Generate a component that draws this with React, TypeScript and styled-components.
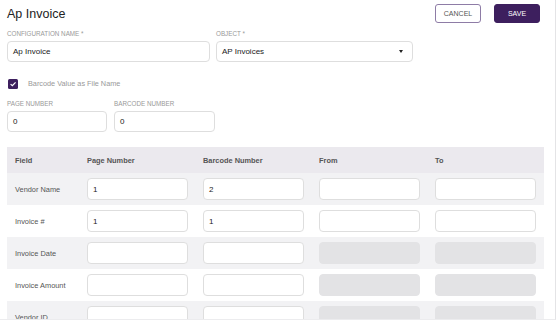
import React from 'react';
import styled, { createGlobalStyle } from 'styled-components';

const GlobalStyle = createGlobalStyle`
	body {
		margin: 0;
		background: #fff;
		font-family: 'Liberation Sans', Arial, sans-serif;
	}
	* {
		box-sizing: border-box;
	}
`;

const Page = styled.div`
	width: 556px;
	height: 320px;
	overflow: hidden;
	border-right: 1px solid #e4e4e6;
	border-bottom: 1px solid #ececee;
	padding: 4px 0 0 7px;
`;

const TopBar = styled.div`
	display: flex;
	align-items: flex-start;
	justify-content: space-between;
	padding-right: 15px;
	height: 26px;
`;

const Title = styled.h1`
	margin: 3px 0 0;
	font-size: 12.5px;
	font-weight: 400;
	color: #222;
`;

const Actions = styled.div`
	display: flex;
	gap: 13px;
`;

type ButtonProps = {
	primary?: boolean;
};

const Button = styled.button<ButtonProps>`
	height: 19px;
	width: 46px;
	border-radius: 3px;
	font-family: inherit;
	font-size: 7px;
	text-transform: uppercase;
	padding: 0;
	cursor: pointer;
	border: 1px solid
		${(props: ButtonProps) => (props.primary ? '#3d1f5e' : '#8e7ca6')};
	background: ${(props: ButtonProps) => (props.primary ? '#3d1f5e' : '#fff')};
	color: ${(props: ButtonProps) => (props.primary ? '#fff' : '#555')};
`;

const Row = styled.div`
	display: flex;
	gap: 6px;
`;

type FieldProps = {
	width: number;
};

const Field = styled.div<FieldProps>`
	display: flex;
	flex-direction: column;
	width: ${(props: FieldProps) => props.width}px;
`;

const Label = styled.label`
	font-size: 6.3px;
	color: #999;
	text-transform: uppercase;
	height: 7px;
	line-height: 7px;
	margin-bottom: 4px;
`;

const TextBox = styled.div`
	height: 21px;
	border: 1px solid #dedede;
	border-radius: 4px;
	background: #fff;
	display: flex;
	align-items: center;
	padding: 0 8px 0 5px;
	font-size: 8px;
	color: #222;
`;

const SelectBox = styled(TextBox)`
	justify-content: space-between;
`;

const Caret = styled.span`
	width: 0;
	height: 0;
	border-left: 2.5px solid transparent;
	border-right: 2.5px solid transparent;
	border-top: 3px solid #222;
	margin-right: 1px;
`;

const CheckRow = styled.div`
	display: flex;
	align-items: center;
	gap: 10px;
	margin: 16px 0 0 1px;
	height: 11px;
`;

const CheckBox = styled.span`
	width: 10px;
	height: 10px;
	border-radius: 1.5px;
	background: #3d1f5e;
	display: flex;
	align-items: center;
	justify-content: center;
`;

const CheckText = styled.span`
	font-size: 7.3px;
	color: #999;
`;

const NumbersRow = styled(Row)`
	margin-top: 11px;
	gap: 7px;
`;

const Table = styled.div`
	margin-top: 15px;
	width: 537px;
`;

type GridRowProps = {
	tone: 'head' | 'stripe' | 'plain';
};

const GridRow = styled.div<GridRowProps>`
	display: grid;
	grid-template-columns: 57px repeat(4, 101px);
	column-gap: 15px;
	align-items: center;
	padding: 0 8px;
	height: ${(props: GridRowProps) => (props.tone === 'head' ? '26px' : '32px')};
	background: ${(props: GridRowProps) =>
		props.tone === 'head'
			? '#ebe9ee'
			: props.tone === 'stripe'
				? '#f2f2f4'
				: '#fff'};
`;

const HeadCell = styled.div`
	font-size: 7.4px;
	font-weight: 700;
	color: #555;
`;

const FieldName = styled.div`
	font-size: 7.4px;
	color: #555;
	white-space: nowrap;
`;

type CellInputProps = {
	disabled?: boolean;
};

const CellInput = styled.div<CellInputProps>`
	height: 22px;
	border-radius: 4px;
	border: 1px solid
		${(props: CellInputProps) => (props.disabled ? '#e3e3e5' : '#dedede')};
	background: ${(props: CellInputProps) => (props.disabled ? '#e3e3e5' : '#fff')};
	display: flex;
	align-items: center;
	padding-left: 5px;
	font-size: 8px;
	color: #222;
`;

const rows = [
	{ name: 'Vendor Name', page: '1', barcode: '2', range: true },
	{ name: 'Invoice #', page: '1', barcode: '1', range: true },
	{ name: 'Invoice Date', page: '', barcode: '', range: false },
	{ name: 'Invoice Amount', page: '', barcode: '', range: false },
	{ name: 'Vendor ID', page: '', barcode: '', range: false },
];

const App: React.FC = () => {
	return (
		<Page>
			<GlobalStyle />
			<TopBar>
				<Title>Ap Invoice</Title>
				<Actions>
					<Button>Cancel</Button>
					<Button primary>Save</Button>
				</Actions>
			</TopBar>
			<Row>
				<Field width={203}>
					<Label>Configuration Name *</Label>
					<TextBox>Ap Invoice</TextBox>
				</Field>
				<Field width={197}>
					<Label>Object *</Label>
					<SelectBox>
						AP Invoices
						<Caret />
					</SelectBox>
				</Field>
			</Row>
			<CheckRow>
				<CheckBox>
					<svg width="8" height="8" viewBox="0 0 10 10">
						<path
							d="M2 5.2 L4.2 7.2 L8.2 3"
							fill="none"
							stroke="#fff"
							strokeWidth="1.5"
						/>
					</svg>
				</CheckBox>
				<CheckText>Barcode Value as File Name</CheckText>
			</CheckRow>
			<NumbersRow>
				<Field width={100}>
					<Label>Page Number</Label>
					<TextBox>0</TextBox>
				</Field>
				<Field width={101}>
					<Label>Barcode Number</Label>
					<TextBox>0</TextBox>
				</Field>
			</NumbersRow>
			<Table>
				<GridRow tone="head">
					<HeadCell>Field</HeadCell>
					<HeadCell>Page Number</HeadCell>
					<HeadCell>Barcode Number</HeadCell>
					<HeadCell>From</HeadCell>
					<HeadCell>To</HeadCell>
				</GridRow>
				{rows.map((row, i) => (
					<GridRow key={row.name} tone={i % 2 === 0 ? 'stripe' : 'plain'}>
						<FieldName>{row.name}</FieldName>
						<CellInput>{row.page}</CellInput>
						<CellInput>{row.barcode}</CellInput>
						<CellInput disabled={!row.range} />
						<CellInput disabled={!row.range} />
					</GridRow>
				))}
			</Table>
		</Page>
	);
};

export default App;
